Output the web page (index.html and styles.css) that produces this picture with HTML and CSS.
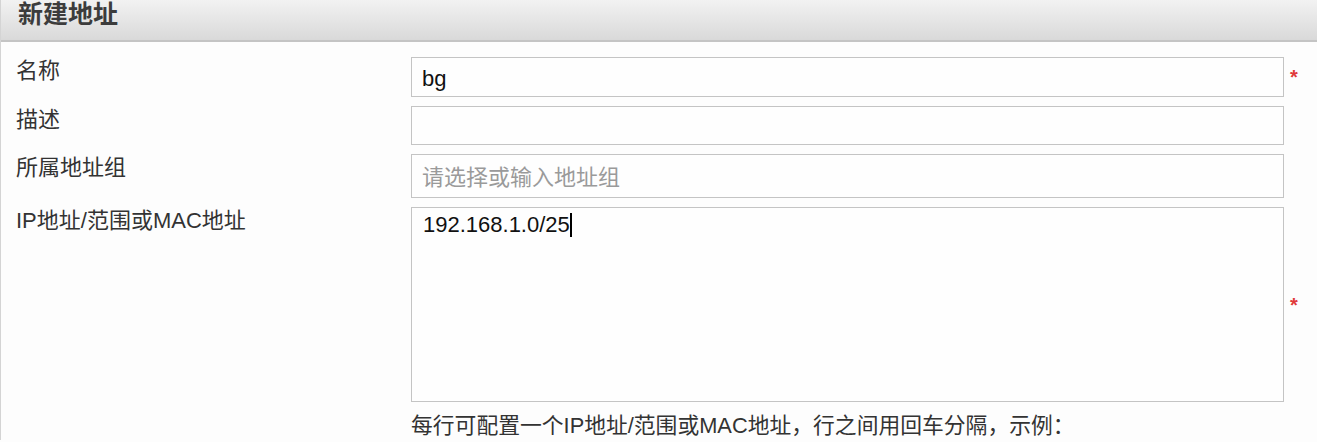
FILE: index.html
```html
<!DOCTYPE html>
<html lang="zh-CN">
<head>
<meta charset="utf-8">
<title>新建地址</title>
<link rel="stylesheet" href="styles.css">
</head>
<body>
<div class="panel">
  <div class="panel-header">新建地址</div>
  <div class="panel-body">
    <div class="form">
      <div class="label">名称</div>
      <div class="field"><input class="input h40" type="text" value="bg"></div>
      <div class="req"><span>*</span></div>

      <div class="label">描述</div>
      <div class="field"><input class="input h39" type="text" value=""></div>
      <div class="req"></div>

      <div class="label">所属地址组</div>
      <div class="field"><input class="input h44" type="text" placeholder="请选择或输入地址组"></div>
      <div class="req"></div>

      <div class="label">IP地址/范围或MAC地址</div>
      <div class="field"><div class="textarea">192.168.1.0/25<span class="caret"></span></div></div>
      <div class="req"><span>*</span></div>

      <div class="label"></div>
      <div class="hint">每行可配置一个IP地址/范围或MAC地址，行之间用回车分隔，示例：</div>
      <div class="req"></div>
    </div>
  </div>
</div>
</body>
</html>
```
FILE: styles.css
```css
html, body {
  margin: 0;
  padding: 0;
  background: #fdfdfd;
}
body {
  width: 1317px;
  height: 442px;
  overflow: hidden;
  font-family: "Liberation Sans", "Noto Sans CJK SC", sans-serif;
  color: #333;
}
.panel {
  border-left: 1px solid #d4d4d4;
}
.panel-header {
  height: 42px;
  box-sizing: border-box;
  padding-left: 17px;
  font-size: 25px;
  font-weight: bold;
  line-height: 28px;
  color: #3c3c3c;
  background: linear-gradient(#f2f2f2, #d9d9d9);
  border-bottom: 2px solid #c4c4c4;
}
.panel-body {
  padding-top: 15px;
  background: #fdfdfd;
}
.form {
  display: grid;
  grid-template-columns: 410px 873px 1fr;
  row-gap: 9px;
}
.label {
  padding-left: 15px;
  font-size: 22px;
  line-height: 28px;
  color: #333;
}
.field {
  display: flex;
}
.input {
  width: 100%;
  box-sizing: border-box;
  border: 1px solid #c4c4c4;
  background: #fefefe;
  padding: 3px 10px 0;
  margin: 0;
  font-family: "Liberation Sans", "Noto Sans CJK SC", sans-serif;
  font-size: 22px;
  color: #111;
  outline: none;
}
.input::placeholder {
  color: #9a9a9a;
}
.h40 { height: 40px; }
.h39 { height: 39px; }
.h44 { height: 44px; }
.textarea {
  width: 100%;
  height: 195px;
  box-sizing: border-box;
  border: 1px solid #c4c4c4;
  background: #fefefe;
  padding: 4px 11px;
  font-size: 22px;
  line-height: 26px;
  color: #111;
}
.caret {
  display: inline-block;
  width: 2px;
  height: 24px;
  background: #000;
  vertical-align: -5px;
}
.req {
  display: flex;
  align-items: center;
  padding-left: 6px;
  color: #e03a3a;
  font-size: 20px;
  font-weight: bold;
  line-height: 1;
}
.hint {
  font-size: 21.8px;
  line-height: 28px;
  color: #333;
  white-space: nowrap;
  margin-top: 1px;
}
```
